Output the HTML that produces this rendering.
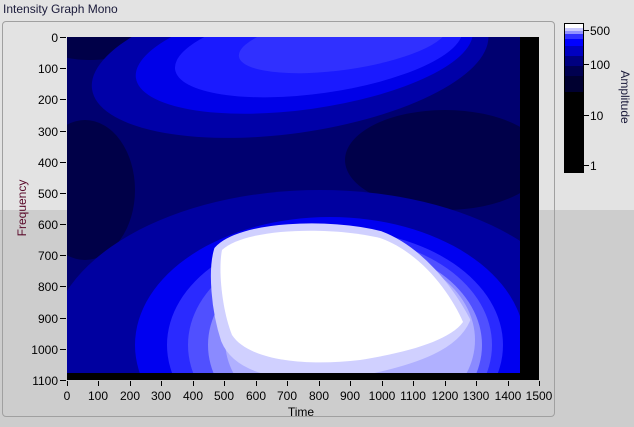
<!DOCTYPE html><html style="margin:0;width:634px;height:427px;overflow:hidden"><head><style>
body{margin:0;width:634px;height:427px;background:#f0f0f0;font-family:"Liberation Sans",sans-serif;overflow:hidden;position:relative}
.t{position:absolute;font-size:12px;color:#000}
svg{display:block}
</style></head><body>
<div style="position:absolute;left:0;top:0;width:634px;height:210px;background:#e3e3e3"></div>
<div style="position:absolute;left:0;top:210px;width:634px;height:217px;background:#cdcdcd"></div>
<div class="t" style="left:3px;top:2px;color:#1a1a3a">Intensity Graph Mono</div>
<div style="position:absolute;left:2px;top:21px;width:553px;height:396px;border:1px solid #a0a0a0;border-radius:4px;box-sizing:border-box"></div>
<svg width="634" height="427" style="position:absolute;left:0;top:0">
<defs><clipPath id="c"><rect x="67" y="37" width="453" height="336"/></clipPath></defs>
<rect x="67" y="37" width="472" height="343" fill="#000"/>
<g clip-path="url(#c)">
<rect x="67" y="37" width="453" height="336" fill="#000070"/>
<ellipse cx="85" cy="190" rx="50" ry="70" fill="#000048"/>
<ellipse cx="445" cy="160" rx="100" ry="50" fill="#00004a"/>
<ellipse cx="90" cy="40" rx="50" ry="20" fill="#000048"/>
<g transform="rotate(-8 300 60)">
<ellipse cx="290" cy="60" rx="200" ry="72" fill="#0000a8"/>
<ellipse cx="305" cy="55" rx="170" ry="55" fill="#0000e8"/>
<ellipse cx="320" cy="52" rx="145" ry="44" fill="#1a1aff"/>
<ellipse cx="345" cy="48" rx="105" ry="28" fill="#3030ff"/>
</g>
<ellipse cx="320" cy="345" rx="270" ry="155" fill="#0000a0"/>
<ellipse cx="330" cy="345" rx="195" ry="128" fill="#0000f0"/>
<ellipse cx="335" cy="345" rx="168" ry="115" fill="#2a2aff"/>
<ellipse cx="340" cy="345" rx="152" ry="108" fill="#5050ff"/>
<ellipse cx="345" cy="345" rx="137" ry="100" fill="#8a8aff"/>
<ellipse cx="350" cy="340" rx="125" ry="92" fill="#b0b0ff"/>
<path d="M218,250 C240,225 330,222 380,235 C420,250 450,290 466,320 C455,345 420,360 360,372 C300,380 240,376 225,340 C215,310 212,270 218,250Z" fill="#d0d0ff" stroke="#d0d0ff" stroke-width="8"/>
<path d="M222,250 C245,228 330,226 380,238 C420,252 450,292 463,322 C450,340 410,352 360,360 C310,366 250,362 232,335 C222,310 218,270 222,250Z" fill="#fff"/>
</g>
<g stroke="#000" stroke-width="1">
<path d="M60,37.5h6M60,68.5h6M60,99.5h6M60,131.5h6M60,162.5h6M60,193.5h6M60,224.5h6M60,255.5h6M60,286.5h6M60,318.5h6M60,349.5h6M60,380.5h6"/>
<path d="M67.5,381v5M98.5,381v5M130.5,381v5M161.5,381v5M193.5,381v5M224.5,381v5M256.5,381v5M287.5,381v5M319.5,381v5M350.5,381v5M382.5,381v5M413.5,381v5M445.5,381v5M476.5,381v5M508.5,381v5M539.5,381v5"/>
<path d="M584,30.5h5M584,64.5h5M584,115.5h5M584,165.5h5"/>
</g>
<g font-family="Liberation Sans" font-size="12" fill="#000" text-anchor="end">
<text x="58" y="42">0</text><text x="58" y="73">100</text><text x="58" y="104">200</text><text x="58" y="136">300</text><text x="58" y="167">400</text><text x="58" y="198">500</text><text x="58" y="229">600</text><text x="58" y="260">700</text><text x="58" y="291">800</text><text x="58" y="323">900</text><text x="58" y="354">1000</text><text x="58" y="385">1100</text>
</g>
<g font-family="Liberation Sans" font-size="12" fill="#000" text-anchor="middle">
<text x="67" y="400">0</text><text x="98" y="400">100</text><text x="130" y="400">200</text><text x="161" y="400">300</text><text x="193" y="400">400</text><text x="224" y="400">500</text><text x="256" y="400">600</text><text x="287" y="400">700</text><text x="319" y="400">800</text><text x="350" y="400">900</text><text x="382" y="400">1000</text><text x="413" y="400">1100</text><text x="445" y="400">1200</text><text x="476" y="400">1300</text><text x="508" y="400">1400</text><text x="539" y="400">1500</text>
<text x="301" y="416">Time</text>
<text transform="translate(26,208) rotate(-90)" fill="#5a0a2a">Frequency</text>
<text transform="translate(621,97) rotate(90)" fill="#1a1a3a">Amplitude</text>
</g>
<rect x="564" y="23" width="20" height="150" fill="#000"/>
<rect x="565" y="24" width="18" height="4" fill="#fff"/>
<rect x="565" y="28" width="18" height="3" fill="#c8c8ff"/>
<rect x="565" y="31" width="18" height="3" fill="#9090ff"/>
<rect x="565" y="34" width="18" height="5" fill="#3030ff"/>
<rect x="565" y="39" width="18" height="7" fill="#0000ff"/>
<rect x="565" y="46" width="18" height="10" fill="#0000c0"/>
<rect x="565" y="56" width="18" height="10" fill="#000080"/>
<rect x="565" y="66" width="18" height="10" fill="#000050"/>
<rect x="565" y="76" width="18" height="16" fill="#000030"/>
<g font-family="Liberation Sans" font-size="12" fill="#000"><text x="590" y="35">500</text><text x="590" y="69">100</text><text x="590" y="120">10</text><text x="590" y="170">1</text></g>
</svg>
</body></html>
